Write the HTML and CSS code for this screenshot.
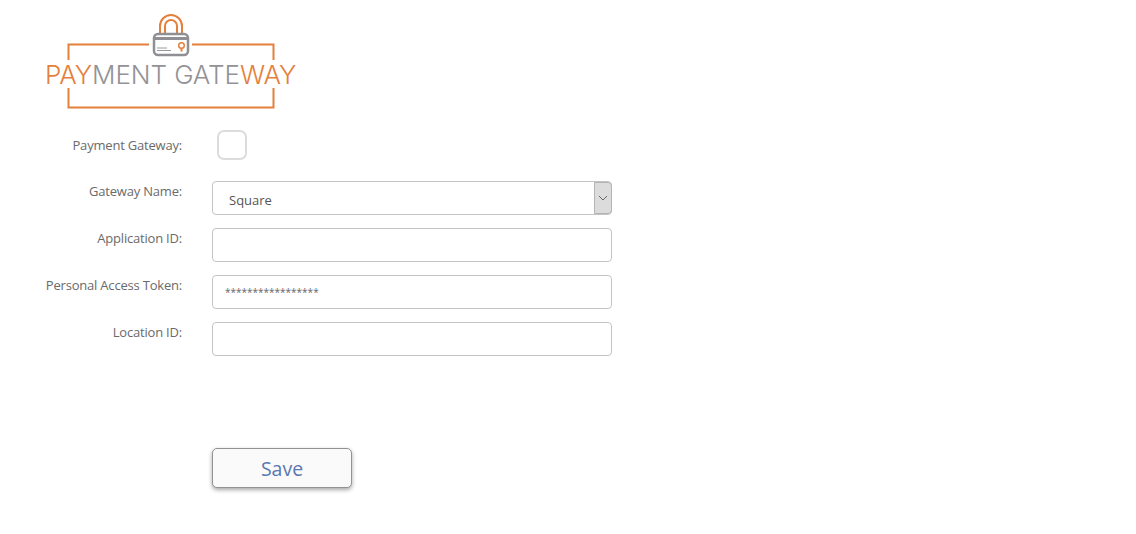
FILE: index.html
```html
<!DOCTYPE html>
<html lang="en">
<head>
<meta charset="utf-8">
<title>Payment Gateway</title>
<link rel="stylesheet" href="styles.css">
</head>
<body>
<main class="page">
  <svg class="logo" width="260" height="100" viewBox="0 0 260 100" aria-label="Payment Gateway logo">
    <g class="frame">
      <path d="M23.500 50V34.500H104"/>
      <path d="M147 34.500H228.500V50"/>
      <path d="M23.500 78V97.500H228.500V78"/>
    </g>
    <path class="shackle" d="M115 23V16A11 11 0 0 1 137 16V23"/>
    <path class="shackle" d="M120 23V16A6 6 0 0 1 132 16V23"/>
    <rect class="body" x="109" y="24" width="34" height="21" rx="4"/>
    <path class="band" d="M109 28.500H143"/>
    <path class="lines" d="M112 38H122M112 40.500H126"/>
    <path class="key" d="M136.500 41.500V37"/>
    <circle class="key-head" cx="136.500" cy="35.500" r="2.800"/>
    <text class="wordmark" x="0" y="74"><tspan class="orange">PAY</tspan><tspan class="grey">MENT GATE</tspan><tspan class="orange">WAY</tspan></text>
  </svg>

  <form class="form">
    <label class="label label-check" for="enabled">Payment Gateway:</label>
    <div class="check-cell"><input class="check" id="enabled" type="checkbox"></div>

    <label class="label" for="gateway">Gateway Name:</label>
    <div class="select-wrap">
      <select class="field select" id="gateway"><option>Square</option></select>
      <span class="arrow"><svg width="10" height="6" viewBox="0 0 10 6"><path d="M1 1L5 5L9 1"/></svg></span>
    </div>

    <label class="label" for="app">Application ID:</label>
    <input class="field" id="app" type="text">

    <label class="label" for="token">Personal Access Token:</label>
    <input class="field token" id="token" type="text" value="*****************">

    <label class="label" for="loc">Location ID:</label>
    <input class="field" id="loc" type="text">

    <button class="save" type="button">Save</button>
  </form>
</main>
</body>
</html>
```
FILE: styles.css
```css
* { box-sizing: border-box; }
html, body { margin: 0; background: #fff; }
body { font-family: "Open Sans", "Noto Sans", sans-serif; color: #666; }
.page { padding: 10px 0 0 45px; height: 534px; }
.logo { display: block; }
.frame path { fill: none; stroke: #e5803c; stroke-width: 2; }
.shackle { fill: none; stroke: #e5803c; stroke-width: 2; }
.body { fill: #fff; stroke: #8f8f94; stroke-width: 2.500; }
.band { stroke: #8f8f94; stroke-width: 3; }
.lines { stroke: #9a9a9e; stroke-width: 1; }
.key { fill: none; stroke: #e5803c; stroke-width: 2; }
.key-head { fill: #fff; stroke: #e5803c; stroke-width: 1.500; }
.wordmark { font-family: Inter, Lato, sans-serif; font-weight: 300; font-size: 26px; letter-spacing: -.08px; }
.orange { fill: #e5803c; }
.grey { fill: #939397; }

.form {
  display: grid;
  grid-template-columns: 137px 400px;
  column-gap: 30px;
  row-gap: 13px;
  align-items: start;
  margin-top: 20px;
}
.label { font-size: 13px; line-height: 20px; text-align: right; white-space: nowrap; letter-spacing: -.2px; color: #6a6a6a; }
.label-check { margin-top: 5px; }
.check-cell { height: 38px; padding-left: 5px; }
.check { appearance: none; display: block; width: 30px; height: 30px; margin: 0; border: 2px solid #dcdcdc; border-radius: 7px; background: #fff; }
.field {
  display: block;
  width: 400px;
  height: 34px;
  margin: 0;
  border: 1px solid #c4c4c4;
  border-radius: 4px;
  background: #fff;
  font-family: inherit;
  font-size: 13px;
  color: #555;
}
.select-wrap { position: relative; width: 400px; height: 34px; }
.select { appearance: none; padding: 4px 24px 0 16px; }
.arrow {
  position: absolute;
  top: 1px; right: 0;
  width: 18px; height: 32px;
  display: flex; align-items: center; justify-content: center;
  background: #dcdcdc;
  border: 1px solid #b4b4b4;
  border-radius: 0 4px 4px 0;
}
.arrow path { fill: none; stroke: #666; stroke-width: 1; }
.token { padding: 0 12px; font-size: 10px; color: #666; }
.save {
  grid-column: 2;
  margin-top: 79px;
  width: 140px;
  height: 40px;
  padding: 0;
  border: 1px solid #929292;
  border-radius: 5px;
  background: #fafafa;
  box-shadow: 0 2px 4px rgba(0,0,0,.35);
  color: #5b78b0;
  font-family: inherit;
  font-size: 19.500px;
}
```
